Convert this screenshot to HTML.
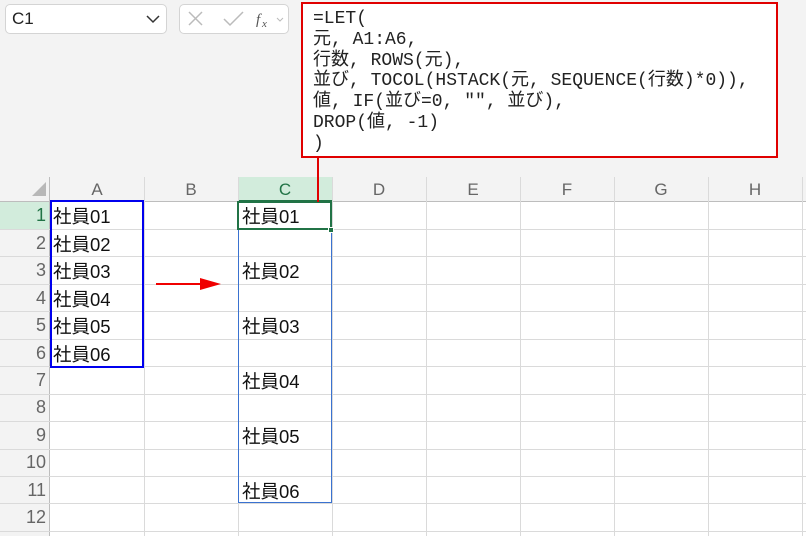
<!DOCTYPE html>
<html><head><meta charset="utf-8">
<style>
*{margin:0;padding:0;box-sizing:border-box}
body{width:806px;height:536px;overflow:hidden;background:#f3f3f3;position:relative;font-family:"Liberation Sans","Noto Sans CJK JP",sans-serif}
.a{position:absolute}
.vl{position:absolute;width:1px;background:#dadada}
.hl{position:absolute;height:1px;background:#dadada}
.rn{position:absolute;left:0;width:46px;text-align:right;font-size:18px;color:#666;}
.ch{position:absolute;top:177px;height:25px;text-align:center;font-size:17px;color:#666;line-height:25px}
.t{position:absolute;font-size:18.5px;color:#111;font-family:"Liberation Sans","Noto Sans CJK JP",sans-serif}
</style></head><body>
<!-- top bar -->
<div class="a" style="left:5px;top:4px;width:162px;height:30px;background:#fff;border:1px solid #d4d4d4;border-radius:5px"></div>
<div class="a" style="left:12px;top:9px;font-size:17px;color:#222">C1</div>
<svg class="a" style="left:146px;top:14px" width="14" height="10"><path d="M1 2 L7 8 L13 2" fill="none" stroke="#333" stroke-width="1.5"/></svg>
<div class="a" style="left:179px;top:4px;width:110px;height:30px;background:#fff;border:1px solid #d4d4d4;border-radius:5px"></div>
<svg class="a" style="left:187px;top:10px" width="100" height="20">
<path d="M2 2 L15 15 M15 2 L2 15" stroke="#bbb" stroke-width="1.5"/>
<path d="M37 9 L43 15 L56 2" fill="none" stroke="#bbb" stroke-width="1.5"/>
<text x="69" y="14" font-family="Liberation Serif" font-style="italic" font-size="15" fill="#555">f</text>
<text x="75" y="17" font-family="Liberation Serif" font-style="italic" font-size="11" fill="#555">x</text>
<path d="M90 8 L93 11 L96 8" fill="none" stroke="#bbb" stroke-width="1"/>
</svg>
<!-- formula box -->
<div class="a" style="left:301px;top:2px;width:477px;height:156px;background:#fff;border:2px solid #e00000"></div>
<pre class="a" style="left:313px;top:9px;font-family:'Liberation Mono','Noto Sans CJK JP',monospace;font-size:18px;line-height:20.8px;color:#222">=LET(
元, A1:A6,
行数, ROWS(元),
並び, TOCOL(HSTACK(元, SEQUENCE(行数)*0)),
値, IF(並び=0, "", 並び),
DROP(値, -1)
)</pre>
<!-- grid -->
<div class="a" style="left:50px;top:202px;width:756px;height:334px;background:#fff"></div>
<div class="a" style="left:0;top:202px;width:50px;height:27px;background:#d2ecdc"></div>
<div class="a" style="left:238px;top:177px;width:94px;height:25px;background:#d2ecdc"></div>
<div class="a" style="left:238px;top:200px;width:94px;height:2px;background:#217346"></div>
<div class="a" style="left:0;top:201px;width:806px;height:1px;background:#bdbdbd"></div>
<div class="a" style="left:49px;top:177px;width:1px;height:359px;background:#bdbdbd"></div>
<svg class="a" style="left:30px;top:180px" width="18" height="18"><path d="M16 2 L16 16 L2 16 Z" fill="#b8b8b8"/></svg>
<div class="vl" style="left:144px;top:177px;height:359px"></div>
<div class="vl" style="left:238px;top:177px;height:359px"></div>
<div class="vl" style="left:332px;top:177px;height:359px"></div>
<div class="vl" style="left:426px;top:177px;height:359px"></div>
<div class="vl" style="left:520px;top:177px;height:359px"></div>
<div class="vl" style="left:614px;top:177px;height:359px"></div>
<div class="vl" style="left:708px;top:177px;height:359px"></div>
<div class="vl" style="left:802px;top:177px;height:359px"></div>
<div class="ch" style="left:50px;width:94px">A</div>
<div class="ch" style="left:144px;width:94px">B</div>
<div class="ch" style="left:238px;width:94px;color:#217346">C</div>
<div class="ch" style="left:332px;width:94px">D</div>
<div class="ch" style="left:426px;width:94px">E</div>
<div class="ch" style="left:520px;width:94px">F</div>
<div class="ch" style="left:614px;width:94px">G</div>
<div class="ch" style="left:708px;width:94px">H</div>
<div class="hl" style="left:0;width:806px;top:229px"></div>
<div class="hl" style="left:0;width:806px;top:256px"></div>
<div class="hl" style="left:0;width:806px;top:284px"></div>
<div class="hl" style="left:0;width:806px;top:311px"></div>
<div class="hl" style="left:0;width:806px;top:339px"></div>
<div class="hl" style="left:0;width:806px;top:366px"></div>
<div class="hl" style="left:0;width:806px;top:394px"></div>
<div class="hl" style="left:0;width:806px;top:421px"></div>
<div class="hl" style="left:0;width:806px;top:449px"></div>
<div class="hl" style="left:0;width:806px;top:476px"></div>
<div class="hl" style="left:0;width:806px;top:503px"></div>
<div class="hl" style="left:0;width:806px;top:531px"></div>
<div class="rn" style="top:205px;color:#217346">1</div>
<div class="rn" style="top:233px">2</div>
<div class="rn" style="top:260px">3</div>
<div class="rn" style="top:288px">4</div>
<div class="rn" style="top:315px">5</div>
<div class="rn" style="top:343px">6</div>
<div class="rn" style="top:370px">7</div>
<div class="rn" style="top:397px">8</div>
<div class="rn" style="top:425px">9</div>
<div class="rn" style="top:452px">10</div>
<div class="rn" style="top:480px">11</div>
<div class="rn" style="top:507px">12</div>
<!-- A data -->
<div class="t" style="left:53px;top:203px">社員01</div>
<div class="t" style="left:53px;top:231px">社員02</div>
<div class="t" style="left:53px;top:258px">社員03</div>
<div class="t" style="left:53px;top:286px">社員04</div>
<div class="t" style="left:53px;top:313px">社員05</div>
<div class="t" style="left:53px;top:341px">社員06</div>
<div class="a" style="left:50px;top:200px;width:94px;height:168px;border:2px solid #0000ee"></div>
<!-- C data -->
<div class="a" style="left:238px;top:229px;width:94px;height:274px;border:1px solid #3a72d0"></div>
<div class="a" style="left:237px;top:201px;width:95px;height:29px;border:2px solid #217346"></div>
<div class="a" style="left:328px;top:227px;width:6px;height:6px;background:#217346;border:1px solid #fff"></div>
<div class="t" style="left:242px;top:203px">社員01</div>
<div class="t" style="left:242px;top:258px">社員02</div>
<div class="t" style="left:242px;top:313px">社員03</div>
<div class="t" style="left:242px;top:368px">社員04</div>
<div class="t" style="left:242px;top:423px">社員05</div>
<div class="t" style="left:242px;top:478px">社員06</div>
<!-- red connector and arrow -->
<div class="a" style="left:317px;top:157px;width:2px;height:45px;background:#e00000"></div>
<svg class="a" style="left:150px;top:274px" width="80" height="20"><path d="M6 10 L52 10" stroke="#f00000" stroke-width="2"/><path d="M50 4 L71 10 L50 16 Z" fill="#f00000"/></svg>
</body></html>
